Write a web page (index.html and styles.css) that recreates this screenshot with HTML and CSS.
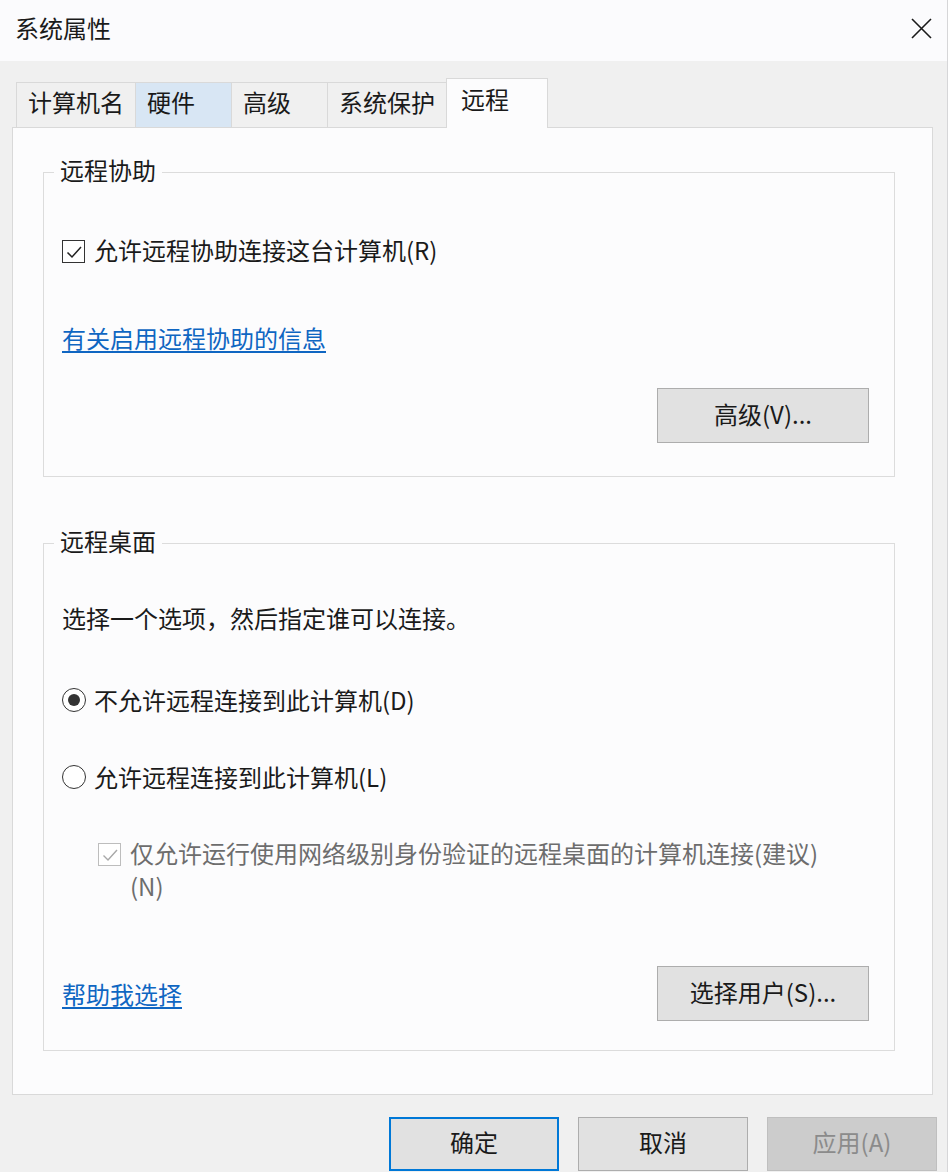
FILE: index.html
```html
<!DOCTYPE html>
<html lang="zh-CN">
<head>
<meta charset="utf-8">
<title>系统属性</title>
<link rel="stylesheet" href="styles.css">
</head>
<body>
<div class="window">
  <header class="titlebar">
    <span class="title">系统属性</span>
    <svg class="close" viewBox="0 0 21 21" aria-label="关闭"><path d="M1 1L20 20M20 1L1 20" stroke="#1a1a1a" stroke-width="1.6" fill="none"/></svg>
  </header>
  <div class="client">
    <nav class="tabs">
      <div class="tab">计算机名</div>
      <div class="tab tab-hover">硬件</div>
      <div class="tab">高级</div>
      <div class="tab">系统保护</div>
      <div class="tab tab-active">远程</div>
    </nav>
    <section class="panel">
      <fieldset class="group group-assist">
        <legend>远程协助</legend>
        <div class="group-body">
          <div class="check-row">
            <span class="checkbox"><svg viewBox="0 0 20 20"><path d="M3.5 10.5L8 15L17 5" stroke="#222" stroke-width="1.5" fill="none"/></svg></span>
            <span>允许远程协助连接这台计算机(R)</span>
          </div>
          <a class="link link-assist">有关启用远程协助的信息</a>
          <div class="btn-row"><button class="btn btn-side">高级(V)...</button></div>
        </div>
      </fieldset>
      <fieldset class="group group-desktop">
        <legend>远程桌面</legend>
        <div class="group-body">
          <p class="desc">选择一个选项，然后指定谁可以连接。</p>
          <div class="radio-row radio-first"><span class="radio radio-checked"></span><span>不允许远程连接到此计算机(D)</span></div>
          <div class="radio-row radio-second"><span class="radio"></span><span>允许远程连接到此计算机(L)</span></div>
          <div class="sub-check">
            <span class="checkbox checkbox-disabled"><svg viewBox="0 0 20 20"><path d="M3.5 10.5L8 15L17 5" stroke="#a8a8a8" stroke-width="1.4" fill="none"/></svg></span>
            <span class="sub-text">仅允许运行使用网络级别身份验证的远程桌面的计算机连接(建议)<br>(N)</span>
          </div>
          <div class="bottom-row">
            <a class="link link-help">帮助我选择</a>
            <button class="btn btn-side">选择用户(S)...</button>
          </div>
        </div>
      </fieldset>
    </section>
    <footer class="actions">
      <button class="btn btn-foot btn-ok">确定</button>
      <button class="btn btn-foot">取消</button>
      <button class="btn btn-foot btn-disabled">应用(A)</button>
    </footer>
  </div>
</div>
</body>
</html>
```
FILE: styles.css
```css
html, body {
  margin: 0;
  padding: 0;
}
body {
  background: #f0f0f0;
  font-family: "Noto Sans CJK SC", "Microsoft YaHei", sans-serif;
  font-size: 24px;
  color: #1a1a1a;
}
.window {
  width: 948px;
  height: 1172px;
  overflow: hidden;
  box-sizing: border-box;
  border-right: 1px solid #d6d6d8;
  background: #f0f0f0;
}
.titlebar {
  height: 61px;
  box-sizing: border-box;
  background: #fbfbfd;
  display: flex;
  align-items: center;
  justify-content: space-between;
  padding: 0 15px 5px 15px;
}
.title {
  line-height: 32px;
}
.close {
  width: 21px;
  height: 21px;
}
.tabs {
  display: flex;
  align-items: flex-end;
  height: 66px;
  padding-left: 16px;
}
.tab {
  box-sizing: border-box;
  height: 45px;
  min-width: 96px;
  padding: 0 11px 7px;
  border: 1px solid #d9d9d9;
  border-right: none;
  border-bottom: none;
  background: #f0f0f0;
  display: flex;
  align-items: center;
  line-height: 32px;
  white-space: nowrap;
}
.tab-hover {
  background: #d8e6f4;
}
.tab-active {
  height: 50px;
  min-width: 102px;
  padding: 0 14px 9px;
  background: #fcfcfd;
  border: 1px solid #d9d9d9;
  border-bottom: none;
  margin-bottom: -1px;
  position: relative;
  z-index: 1;
}
.panel {
  margin-left: 12px;
  width: 921px;
  box-sizing: border-box;
  background: #fcfcfd;
  border: 1px solid #d9d9d9;
  padding: 28px 37px 43px 30px;
}
.group {
  margin: 0;
  min-inline-size: 0;
  border: 1px solid #dcdcdc;
}
.group legend {
  padding: 0 6px 4px;
  margin-left: -8px;
  line-height: 28px;
}
.group-assist {
  padding: 46px 25px 33px 18px;
}
.group-desktop {
  margin-top: 50px;
  padding: 43px 25px 29px 18px;
}
.group-body {
  display: flex;
  flex-direction: column;
  align-items: flex-start;
}
.check-row {
  display: flex;
  align-items: center;
  gap: 9px;
  height: 32px;
  line-height: 32px;
  white-space: nowrap;
}
.check-row .checkbox {
  margin-top: 3px;
}
.checkbox {
  flex: none;
  width: 23px;
  height: 23px;
  box-sizing: border-box;
  border: 1.5px solid #333;
  background: #fff;
  display: flex;
  align-items: center;
  justify-content: center;
}
.checkbox svg {
  width: 20px;
  height: 20px;
}
.checkbox-disabled {
  border-color: #bdbdbd;
  margin-top: 7px;
}
.link {
  display: block;
  line-height: 32px;
  color: #0f66c2;
  text-decoration: underline;
  text-underline-offset: 3px;
  text-decoration-thickness: 1.5px;
  white-space: nowrap;
}
.link-assist {
  margin-top: 56px;
}
.btn-row {
  align-self: stretch;
  display: flex;
  justify-content: flex-end;
  margin-top: 34px;
}
.btn {
  box-sizing: border-box;
  background: #e1e1e1;
  border: 1px solid #adadad;
  font: inherit;
  color: #1a1a1a;
  padding: 0 0 4px;
  line-height: 32px;
  white-space: nowrap;
}
.btn-side {
  width: 212px;
  height: 55px;
}
.desc {
  margin: 0;
  line-height: 32px;
  white-space: nowrap;
}
.radio-row {
  display: flex;
  align-items: center;
  gap: 8px;
  line-height: 32px;
  white-space: nowrap;
}
.radio-first {
  margin-top: 50px;
}
.radio-second {
  margin-top: 45px;
}
.radio {
  flex: none;
  width: 24px;
  height: 24px;
  box-sizing: border-box;
  border: 1.6px solid #333;
  border-radius: 50%;
  background: #fff;
  display: flex;
  align-items: center;
  justify-content: center;
}
.radio-checked::after {
  content: "";
  width: 12px;
  height: 12px;
  border-radius: 50%;
  background: #333;
}
.sub-check {
  margin-top: 43px;
  padding-left: 36px;
  display: flex;
  align-items: flex-start;
  gap: 9px;
  color: #6d6d6d;
  line-height: 33px;
  white-space: nowrap;
}
.bottom-row {
  align-self: stretch;
  margin-top: 64px;
  display: flex;
  justify-content: space-between;
  align-items: center;
}
.link-help {
  margin-top: 0;
}
.actions {
  display: flex;
  justify-content: flex-end;
  gap: 19px;
  margin-top: 22px;
  padding-right: 10px;
}
.btn-foot {
  width: 170px;
  height: 54px;
}
.btn-ok {
  border: 2px solid #0078d7;
}
.btn-disabled {
  background: #cccccc;
  border-color: #bfbfbf;
  color: #8b8b8b;
}
```
